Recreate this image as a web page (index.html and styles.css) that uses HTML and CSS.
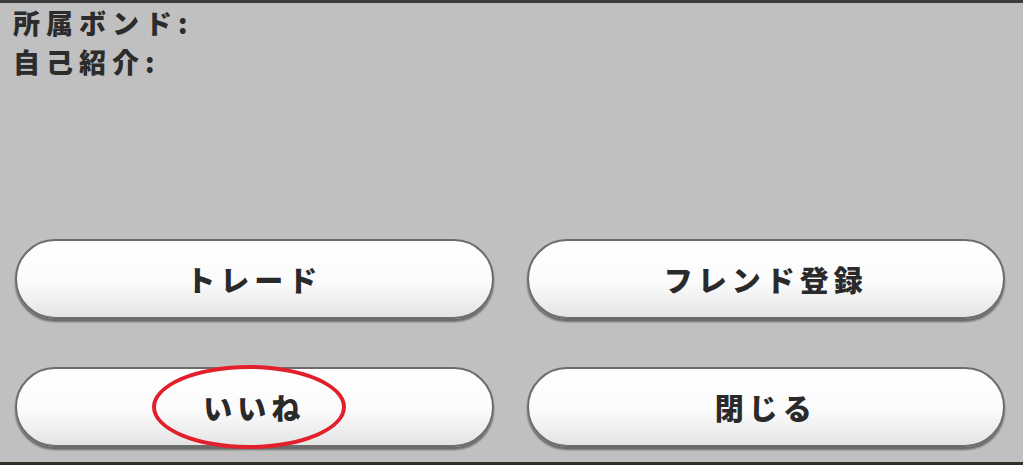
FILE: index.html
```html
<!DOCTYPE html>
<html lang="ja">
<head>
<meta charset="utf-8">
<link rel="stylesheet" href="styles.css">
</head>
<body>
<div class="screen">
  <div class="info">
    <div class="line">所属ボンド:</div>
    <div class="line">自己紹介:</div>
  </div>
  <div class="actions">
    <button class="btn">トレード</button>
    <button class="btn">フレンド登録</button>
    <button class="btn btn-marked">いいね<span class="mark"></span></button>
    <button class="btn">閉じる</button>
  </div>
</div>
</body>
</html>
```
FILE: styles.css
```css
html, body {
  margin: 0;
  padding: 0;
}
body {
  width: 1023px;
  height: 465px;
  overflow: hidden;
  background: #c0c0c0;
  font-family: "Noto Sans CJK JP", "Noto Sans", sans-serif;
}
.screen {
  box-sizing: border-box;
  height: 465px;
  border-top: 3px solid #3c3c3c;
  border-bottom: 3px solid #2b3126;
  display: flex;
  flex-direction: column;
}
.info {
  padding: 0 0 0 13px;
  color: #2c2c2c;
  font-weight: 900;
  font-size: 27px;
  line-height: 39px;
  letter-spacing: 6px;
}
.actions {
  margin-top: auto;
  margin-bottom: 15px;
  padding: 0 18px 0 15px;
  display: grid;
  grid-template-columns: 1fr 1fr;
  column-gap: 33px;
  row-gap: 48px;
}
.btn {
  position: relative;
  height: 80px;
  border-radius: 40px;
  border: 2px solid #6c6c6c;
  background: linear-gradient(#ffffff 0%, #fbfbfb 55%, #e4e4e4 100%);
  box-shadow: 0 3px 2px rgba(0, 0, 0, 0.45);
  font-family: "Noto Sans CJK JP", "Noto Sans", sans-serif;
  font-weight: 900;
  font-size: 29px;
  letter-spacing: 5px;
  color: #2a2a2a;
  padding: 0;
  display: flex;
  align-items: center;
  justify-content: center;
}
.mark {
  position: absolute;
  left: 135px;
  top: -4px;
  width: 186px;
  height: 76px;
  border: 4px solid #e1202b;
  border-radius: 50%;
}
```
